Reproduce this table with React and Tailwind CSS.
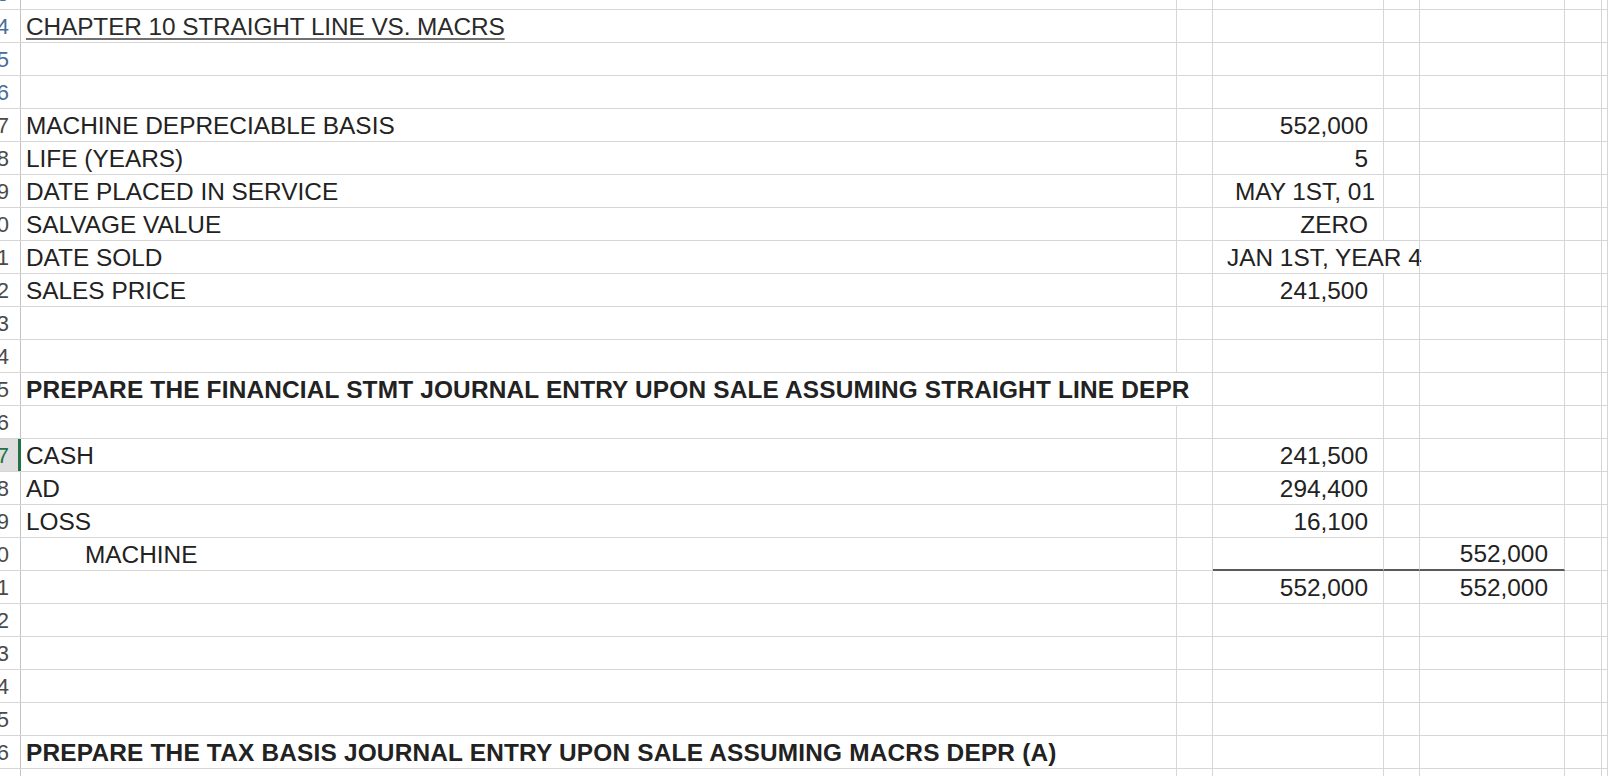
import React from "react";

const GRID = "border-[#d6d6d6]";

function Cell({ w, children, cls = "", noRight = false, bottomDark = false }) {
  return (
    <div
      className={`${w} shrink-0 h-full flex items-end pb-[3px] whitespace-nowrap ${
        noRight ? "" : `border-r ${GRID}`
      } ${bottomDark ? "border-b-2 border-b-[#5a5a5a]" : `border-b ${GRID}`} ${cls}`}
    >
      {children}
    </div>
  );
}

function Row({
  n,
  h = "h-[33px]",
  a,
  aCls = "pl-[5px]",
  aNoRight = false,
  c,
  cCls = "justify-end pr-[15px]",
  cNoRight = false,
  e,
  eCls = "justify-end pr-[16px]",
  selected = false,
  dark = false,
  headColor = "text-[#4a4a4a]",
}) {
  return (
    <div className={`flex ${h} w-full`}>
      <div
        className={`w-[21px] shrink-0 h-full relative overflow-hidden flex items-end justify-end pr-[12px] pb-[4px] border-b ${GRID} ${
          selected ? "bg-[#dedede]" : ""
        }`}
      >
        <span
          className={`text-[22px] leading-none ${
            selected ? "text-[#217346]" : headColor
          }`}
        >
          {n}
        </span>
        <div
          className={`absolute right-0 top-0 bottom-0 ${
            selected ? "w-[3px] bg-[#217346]" : "w-px bg-[#c4c4c4]"
          }`}
        />
      </div>
      <Cell w="w-[1156px]" cls={aCls} noRight={aNoRight}>
        {a}
      </Cell>
      <Cell w="w-[36px]" />
      <Cell w="w-[171px]" cls={cCls} noRight={cNoRight} bottomDark={dark}>
        {c}
      </Cell>
      <Cell w="w-[36px]" bottomDark={dark} />
      <Cell w="w-[145px]" cls={eCls} bottomDark={dark}>
        {e}
      </Cell>
      <Cell w="w-[37px]" />
      <Cell w="flex-1" />
    </div>
  );
}

export default function App() {
  return (
    <div className="w-[1608px] h-[776px] overflow-hidden bg-white font-['Liberation_Sans',Arial,sans-serif] text-[24.4px] leading-none text-[#222]">
      <Row n="3" h="h-[10px]" headColor="text-[#4a6a9a]" />
      <Row
        n="4"
        headColor="text-[#4a6a9a]"
        a={
          <span className="underline decoration-2 decoration-[#707070] underline-offset-[3px] text-[#2a2a2a] tracking-[-0.1px]">
            CHAPTER 10 STRAIGHT LINE VS. MACRS
          </span>
        }
      />
      <Row n="5" headColor="text-[#4a6a9a]" />
      <Row n="6" headColor="text-[#4a6a9a]" />
      <Row n="7" a="MACHINE DEPRECIABLE BASIS" c="552,000" />
      <Row n="8" a="LIFE (YEARS)" c="5" />
      <Row
        n="9"
        a="DATE PLACED IN SERVICE"
        c="MAY 1ST, 01"
        cCls="justify-end pr-[8px]"
      />
      <Row n="10" a="SALVAGE VALUE" c="ZERO" />
      <Row
        n="11"
        a="DATE SOLD"
        c="JAN 1ST, YEAR 4"
        cCls="justify-start pl-[14px]"
        cNoRight
      />
      <Row n="12" a="SALES PRICE" c="241,500" />
      <Row n="13" />
      <Row n="14" />
      <Row
        n="15"
        aNoRight
        a={
          <span className="font-bold tracking-[0.18px]">
            PREPARE THE FINANCIAL STMT JOURNAL ENTRY UPON SALE ASSUMING STRAIGHT LINE DEPR
          </span>
        }
      />
      <Row n="16" />
      <Row n="17" selected a="CASH" c="241,500" />
      <Row n="18" a="AD" c="294,400" />
      <Row n="19" a="LOSS" c="16,100" />
      <Row n="20" a="MACHINE" aCls="pl-[64px]" e="552,000" dark />
      <Row n="21" c="552,000" e="552,000" />
      <Row n="22" />
      <Row n="23" />
      <Row n="24" />
      <Row n="25" />
      <Row
        n="26"
        a={
          <span className="font-bold tracking-[0.2px]">
            PREPARE THE TAX BASIS JOURNAL ENTRY UPON SALE ASSUMING MACRS DEPR (A)
          </span>
        }
      />
      <Row n="27" />
    </div>
  );
}
